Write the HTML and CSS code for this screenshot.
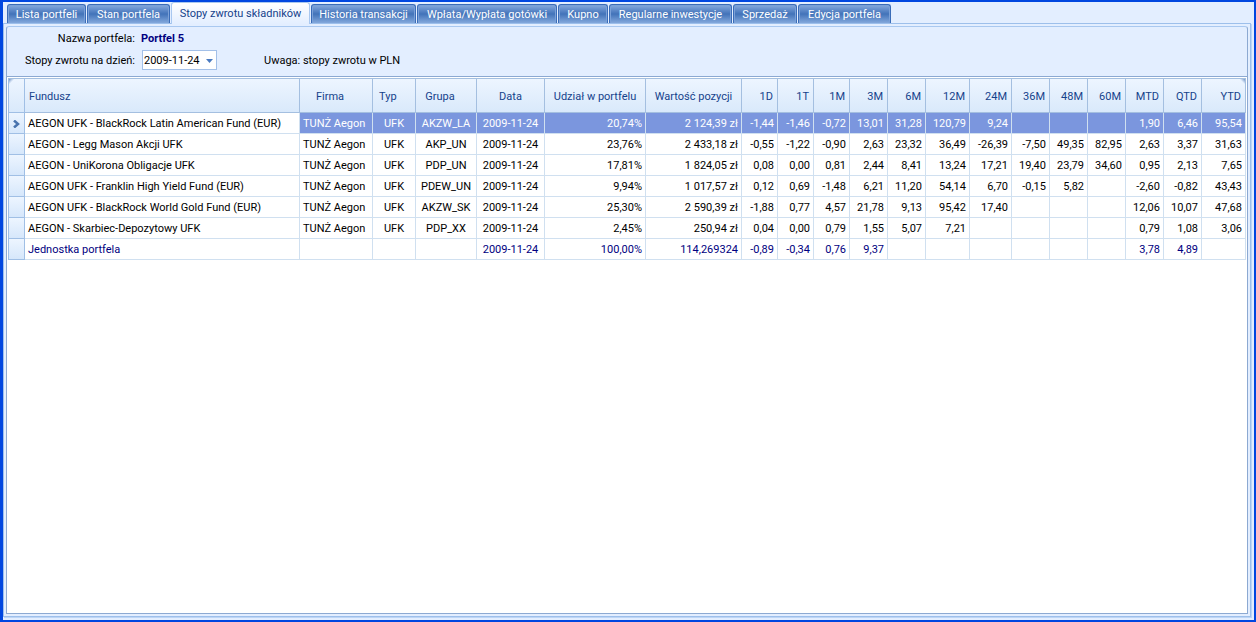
FILE: index.html
```html
<!DOCTYPE html>
<html lang="pl">
<head>
<meta charset="utf-8">
<title>Stopy zwrotu składników</title>
<link rel="stylesheet" href="styles.css">
</head>
<body>
<main class="window">
<nav class="tabs" role="tablist">
<button class="tab w79" role="tab">Lista portfeli</button>
<button class="tab w83" role="tab">Stan portfela</button>
<button class="tab w139 active" role="tab" aria-selected="true">Stopy zwrotu składników</button>
<button class="tab w105" role="tab">Historia transakcji</button>
<button class="tab w140" role="tab">Wpłata/Wypłata gotówki</button>
<button class="tab w50" role="tab">Kupno</button>
<button class="tab w123" role="tab">Regularne inwestycje</button>
<button class="tab w64" role="tab">Sprzedaż</button>
<button class="tab w93" role="tab">Edycja portfela</button>
</nav>
<section class="page">
<div class="panel">
<form class="info">
<span class="label">Nazwa portfela:</span>
<output class="name">Portfel 5</output>
<label class="label row2" for="day">Stopy zwrotu na dzień:</label>
<span class="combo"><select id="day"><option>2009-11-24</option></select><svg class="arrow" width="7" height="4" viewBox="0 0 7 4"><path d="M0 0h7L3.500 4z" fill="#4a7ac0"/></svg></span>
<span class="note">Uwaga: stopy zwrotu w PLN</span>
</form>
<div class="gridbox">
<table class="grid">
<colgroup><col class="c-sel"><col><col class="c-firm"><col class="c-type"><col class="c-group"><col class="c-date"><col class="c-share"><col class="c-value"><col class="c36"><col class="c36"><col class="c36"><col class="c38"><col class="c38"><col class="c44"><col class="c42"><col class="c38"><col class="c38"><col class="c38"><col class="c38"><col class="c38"><col class="c44"></colgroup>
<thead><tr><th class="sel"></th><th class="fund">Fundusz</th><th class="firm">Firma</th><th class="type">Typ</th><th class="group">Grupa</th><th class="mid">Data</th><th class="mid">Udział w portfelu</th><th class="mid">Wartość pozycji</th><th>1D</th><th>1T</th><th>1M</th><th>3M</th><th>6M</th><th>12M</th><th>24M</th><th>36M</th><th>48M</th><th>60M</th><th>MTD</th><th>QTD</th><th class="last">YTD</th></tr></thead>
<tbody>
<tr class="current"><td class="sel"><svg width="7" height="8" viewBox="0 0 7 8"><path d="M1 .5L5 4 1 7.500" fill="none" stroke="#4a74ae" stroke-width="2.500"/></svg></td><td class="fund">AEGON UFK - BlackRock Latin American Fund (EUR)</td><td class="left">TUNŻ Aegon</td><td class="mid">UFK</td><td class="mid">AKZW_LA</td><td class="mid">2009-11-24</td><td>20,74%</td><td>2 124,39 zł</td><td>-1,44</td><td>-1,46</td><td>-0,72</td><td>13,01</td><td>31,28</td><td>120,79</td><td>9,24</td><td></td><td></td><td></td><td>1,90</td><td>6,46</td><td>95,54</td></tr>
<tr><td class="sel"></td><td class="fund">AEGON - Legg Mason Akcji UFK</td><td class="left">TUNŻ Aegon</td><td class="mid">UFK</td><td class="mid">AKP_UN</td><td class="mid">2009-11-24</td><td>23,76%</td><td>2 433,18 zł</td><td>-0,55</td><td>-1,22</td><td>-0,90</td><td>2,63</td><td>23,32</td><td>36,49</td><td>-26,39</td><td>-7,50</td><td>49,35</td><td>82,95</td><td>2,63</td><td>3,37</td><td>31,63</td></tr>
<tr><td class="sel"></td><td class="fund">AEGON - UniKorona Obligacje UFK</td><td class="left">TUNŻ Aegon</td><td class="mid">UFK</td><td class="mid">PDP_UN</td><td class="mid">2009-11-24</td><td>17,81%</td><td>1 824,05 zł</td><td>0,08</td><td>0,00</td><td>0,81</td><td>2,44</td><td>8,41</td><td>13,24</td><td>17,21</td><td>19,40</td><td>23,79</td><td>34,60</td><td>0,95</td><td>2,13</td><td>7,65</td></tr>
<tr><td class="sel"></td><td class="fund">AEGON UFK - Franklin High Yield Fund (EUR)</td><td class="left">TUNŻ Aegon</td><td class="mid">UFK</td><td class="mid">PDEW_UN</td><td class="mid">2009-11-24</td><td>9,94%</td><td>1 017,57 zł</td><td>0,12</td><td>0,69</td><td>-1,48</td><td>6,21</td><td>11,20</td><td>54,14</td><td>6,70</td><td>-0,15</td><td>5,82</td><td></td><td>-2,60</td><td>-0,82</td><td>43,43</td></tr>
<tr><td class="sel"></td><td class="fund">AEGON UFK - BlackRock World Gold Fund (EUR)</td><td class="left">TUNŻ Aegon</td><td class="mid">UFK</td><td class="mid">AKZW_SK</td><td class="mid">2009-11-24</td><td>25,30%</td><td>2 590,39 zł</td><td>-1,88</td><td>0,77</td><td>4,57</td><td>21,78</td><td>9,13</td><td>95,42</td><td>17,40</td><td></td><td></td><td></td><td>12,06</td><td>10,07</td><td>47,68</td></tr>
<tr><td class="sel"></td><td class="fund">AEGON - Skarbiec-Depozytowy UFK</td><td class="left">TUNŻ Aegon</td><td class="mid">UFK</td><td class="mid">PDP_XX</td><td class="mid">2009-11-24</td><td>2,45%</td><td>250,94 zł</td><td>0,04</td><td>0,00</td><td>0,79</td><td>1,55</td><td>5,07</td><td>7,21</td><td></td><td></td><td></td><td></td><td>0,79</td><td>1,08</td><td>3,06</td></tr>
<tr class="total"><td class="sel"></td><td class="fund">Jednostka portfela</td><td></td><td></td><td></td><td class="mid">2009-11-24</td><td>100,00%</td><td>114,269324</td><td>-0,89</td><td>-0,34</td><td>0,76</td><td>9,37</td><td></td><td></td><td></td><td></td><td></td><td></td><td>3,78</td><td>4,89</td><td></td></tr>
</tbody>
</table>
</div>
</div>
</section>
</main>
</body>
</html>
```
FILE: styles.css
```css
* { box-sizing: border-box; }
body { margin: 0; }
body, button, select {
  font-family: Tahoma, Roboto, "Noto Sans", sans-serif;
  font-size: 11px;
  line-height: 14px;
}
.window {
  display: flex;
  flex-direction: column;
  min-height: 100vh;
  padding: 0 3px 3px 0;
  background: #e3eeff;
  border: 2px solid #0046e0;
  border-left-width: 3px;
}
.tabs { display: flex; align-items: flex-end; height: 21px; padding-left: 4px; }
.tab {
  flex: none;
  height: 19px;
  margin-right: 1px;
  padding: 2px 0 0;
  border: 1px solid #3a6cb8;
  border-bottom: 0;
  border-radius: 3px 3px 0 0;
  background: linear-gradient(#86aade, #6f97d2 3px, #4273b9 50%, #83a8dc);
  box-shadow: inset 1px 1px #7ba1d8, inset -1px 0 #7ba1d8;
  color: #fff;
  white-space: nowrap;
}
.tab.active {
  position: relative;
  align-self: flex-start;
  height: 22px;
  border-color: #a9c8f0;
  padding: 0;
  background: linear-gradient(#fff, #e3eeff);
  box-shadow: none;
  color: #15428b;
}
.w50 { width: 50px; }
.w64 { width: 64px; }
.w79 { width: 79px; }
.w83 { width: 83px; }
.w93 { width: 93px; }
.w105 { width: 105px; }
.w123 { width: 123px; }
.w139 { width: 139px; }
.w140 { width: 140px; }
.page {
  display: flex;
  flex: 1;
  padding: 2px;
  border: 1px solid #9dbfeb;
  box-shadow: 1px 1px #bdd5f5;
}
.panel {
  display: flex;
  flex: 1;
  flex-direction: column;
  min-width: 0;
  border: 1px solid #8ca9d2;
  border-top-color: #a9c8f0;
  border-radius: 3px 3px 0 0;
}
.info {
  display: grid;
  grid-template-columns: 128px 123px 1fr;
  grid-template-rows: 22px 22px;
  align-items: center;
  height: 49px;
}
.label, .name, .note { padding-top: 2px; }
.label { justify-self: end; }
.name { padding-left: 6px; color: #000080; font-weight: bold; }
.row2 { grid-area: 2 / 1; }
.combo { grid-area: 2 / 2; position: relative; justify-self: start; margin-left: 7px; }
.combo select {
  display: block;
  width: 75px;
  height: 20px;
  padding: 2px 1px 0;
  border: 1px solid #a3c0e8;
  border-radius: 0;
  background: #fff;
  color: #000;
  appearance: none;
}
.arrow { position: absolute; right: 4px; top: 9px; pointer-events: none; }
.note { grid-area: 2 / 3; padding-left: 6px; }
.gridbox {
  flex: 1;
  padding: 1px;
  border-top: 1px solid #8ca9d2;
  background: #fff;
}
.grid { width: 100%; table-layout: fixed; border-collapse: separate; border-spacing: 0; }
.grid th {
  height: 35px;
  padding: 2px 4px 0;
  border: 1px solid #a4bfe0;
  border-left-width: 0;
  background: linear-gradient(#edf5ff, #d9e9fb);
  color: #15428b;
  font-weight: normal;
  text-align: right;
  white-space: nowrap;
}
.grid td {
  height: 21px;
  padding: 2px 3px 0;
  border: 1px solid #d0e0f0;
  border-width: 0 1px 1px 0;
  text-align: right;
  white-space: nowrap;
}
.grid .mid { padding-left: 0; padding-right: 0; text-align: center; }
.grid .fund, .grid .left { text-align: left; }
.grid th.firm, .grid th.group { text-align: center; padding-left: 0; padding-right: 12px; }
.grid th.type { text-align: left; padding-left: 6px; }
.grid .sel {
  border-left: 1px solid #a0bfe5;
  border-right-color: #a0bfe5;
  border-bottom-color: #a0bfe5;
}
.grid th.sel { background: linear-gradient(135deg, #6f93c6, transparent 4px), linear-gradient(#edf5ff, #d9e9fb); }
.grid th.last { background: linear-gradient(225deg, #6f93c6, transparent 4px), linear-gradient(#edf5ff, #d9e9fb); }
.grid td.sel { padding: 2px 0 0; background: linear-gradient(#edf5ff, #d6e7fb); text-align: center; line-height: 0; }
.grid .current td:nth-child(n+3) { background: #7b96de; color: #fff; }
.grid .total { color: #000080; }
.c-sel { width: 17px; }
.c-firm { width: 73px; }
.c-type { width: 43px; }
.c-group { width: 61px; }
.c-date { width: 68px; }
.c-share { width: 101px; }
.c-value { width: 96px; }
.c36 { width: 36px; }
.c38 { width: 38px; }
.c42 { width: 42px; }
.c44 { width: 44px; }
```
